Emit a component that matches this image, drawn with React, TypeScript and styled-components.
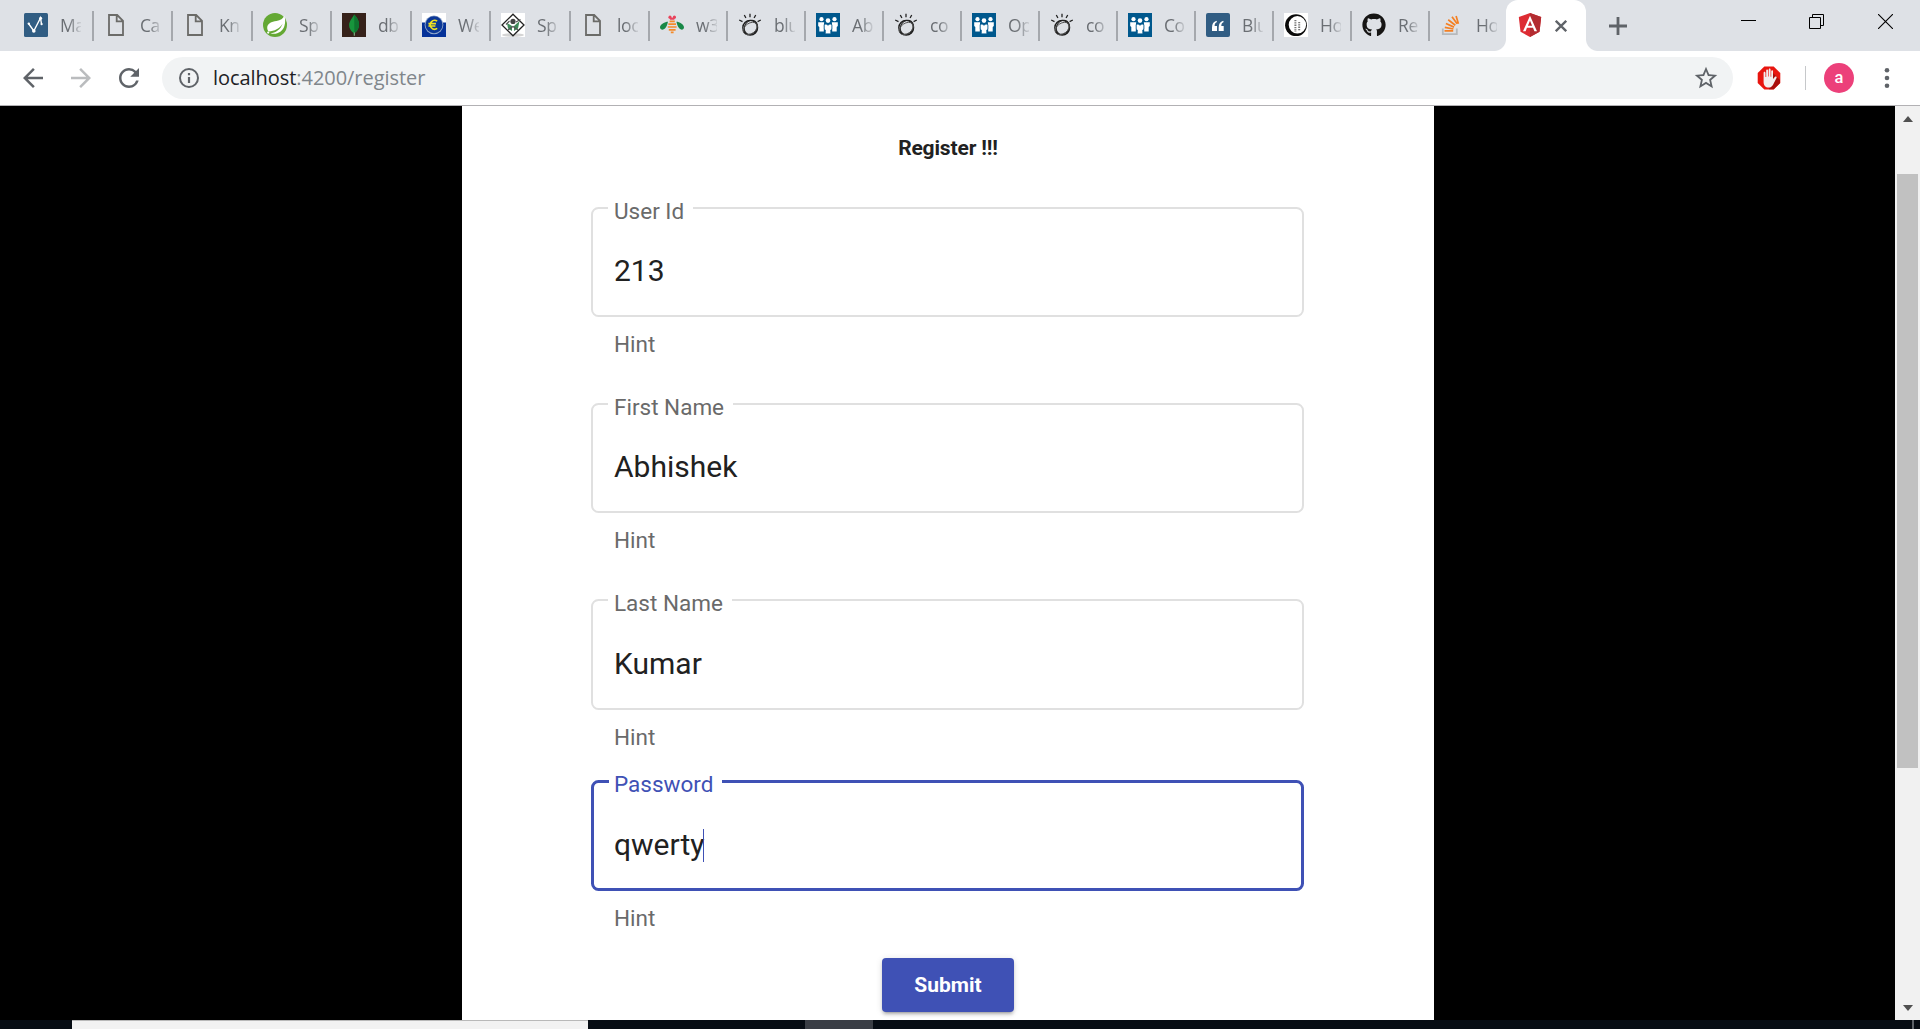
import React from "react";
import styled, { createGlobalStyle } from "styled-components";
import { FaGithub } from "react-icons/fa";

const GlobalStyle = createGlobalStyle`
  * { box-sizing: border-box; }
  html, body, #root { height: 100%; }
  body { margin: 0; overflow: hidden; background: #000; font-family: Roboto, sans-serif; }
`;

const Screen = styled.div`
  display: flex;
  flex-direction: column;
  width: 1920px;
  height: 1029px;
  overflow: hidden;
`;

/* ---------- tab strip ---------- */

const TabStrip = styled.div`
  display: flex;
  flex: none;
  height: 51px;
  padding-left: 12px;
  background: #dee1e6;
`;

const Tab = styled.div<{ $width: number }>`
  display: flex;
  flex: none;
  align-items: center;
  width: ${(p) => p.$width}px;
  height: 51px;
  padding-left: 12px;
`;

const TabDivider = styled.div`
  flex: none;
  width: 2px;
  height: 30px;
  margin: 11px -2px 0 0;
  background: #a5a8ad;
`;

const Favicon = styled.svg`
  display: block;
  flex: none;
  width: 24px;
  height: 24px;
  margin-top: -1px;
`;

const TabTitle = styled.span`
  flex: none;
  width: 21px;
  margin: -1px 0 0 12px;
  overflow: hidden;
  white-space: nowrap;
  font: 400 17.5px/26px "Open Sans", sans-serif;
  letter-spacing: -0.4px;
  color: #6a6e73;
  -webkit-mask-image: linear-gradient(90deg, #000 40%, rgba(0, 0, 0, 0.15) 100%);
  mask-image: linear-gradient(90deg, #000 40%, rgba(0, 0, 0, 0.15) 100%);
`;

const ActiveTab = styled.div`
  position: relative;
  display: flex;
  flex: none;
  align-items: center;
  gap: 13px;
  width: 80px;
  height: 51px;
  padding-left: 12px;
  border-radius: 12px 12px 0 0;
  background: #fff;
  &::before,
  &::after {
    content: "";
    position: absolute;
    bottom: 0;
    width: 12px;
    height: 12px;
  }
  &::before {
    right: 100%;
    background: radial-gradient(circle at 0 0, transparent 11.5px, #fff 12.5px);
  }
  &::after {
    left: 100%;
    background: radial-gradient(circle at 100% 0, transparent 11.5px, #fff 12.5px);
  }
`;

const NewTab = styled.div`
  display: flex;
  flex: none;
  align-items: center;
  padding-left: 23px;
`;

const WindowControls = styled.div`
  display: grid;
  grid-template-columns: 68px 69px 15px;
  margin: 14px 27px 0 auto;
`;

const Glyph = styled.svg<{ $w: number; $h?: number }>`
  display: block;
  flex: none;
  width: ${(p) => p.$w}px;
  height: ${(p) => p.$h ?? p.$w}px;
`;

/* ---------- toolbar ---------- */

const Toolbar = styled.div`
  display: flex;
  flex: none;
  align-items: center;
  height: 55px;
  padding-left: 18px;
  border-bottom: 1px solid #b2b1b4;
  background: #fff;
`;

const NavButtons = styled.div`
  display: flex;
  gap: 18px;
  width: 144px;
`;

const Omnibox = styled.div`
  display: flex;
  align-items: center;
  width: 1571px;
  height: 42px;
  padding: 0 12px 0 15px;
  border-radius: 21px;
  background: #f1f3f4;
`;

const Url = styled.div`
  flex: 1;
  font: 400 20px/30px "Open Sans", sans-serif;
  margin: 0 0 0 12px;
  letter-spacing: -0.05px;
  color: #80868b;
`;

const Host = styled.span`
  color: #202124;
`;

const Extensions = styled.div`
  display: flex;
  align-items: center;
  padding-left: 24px;
`;

const ToolbarRule = styled.div`
  width: 1px;
  height: 24px;
  margin: 0 18px 0 24px;
  background: #c6c8ca;
`;

const Avatar = styled.div`
  width: 30px;
  height: 30px;
  margin-right: 18px;
  border-radius: 50%;
  background: #ec407a;
  color: #fff;
  font: 500 16.5px/29px Roboto, sans-serif;
  text-align: center;
`;

/* ---------- page ---------- */

const Viewport = styled.div`
  display: flex;
  flex: none;
  height: 914px;
  background: #000;
`;

const PageArea = styled.main`
  flex: 1;
  display: flex;
  padding-left: 462px;
`;

const Card = styled.form`
  display: flex;
  flex-direction: column;
  align-items: center;
  width: 972px;
  height: 914px;
  background: #fff;
`;

const Heading = styled.h4`
  height: 101px;
  margin: 0;
  padding-top: 27px;
  font: 700 21px/30px Roboto, sans-serif;
  letter-spacing: -0.15px;
  color: #212121;
`;

const Field = styled.div<{ $height: number }>`
  flex: none;
  width: 713px;
  height: ${(p) => p.$height}px;
  margin-right: 1px;
`;

const Outline = styled.div<{ $focused?: boolean; $height: number }>`
  display: flex;
  flex-direction: column;
  align-items: flex-start;
  height: ${(p) => p.$height}px;
  padding-left: 15px;
  border: ${(p) => (p.$focused ? "3px solid #3f51b5" : "2px solid #e0e0e0")};
  border-radius: 7.5px;
`;

const Label = styled.label<{ $focused?: boolean }>`
  height: 26px;
  margin-top: ${(p) => (p.$focused ? -12 : -11)}px;
  padding: 0 9px 0 ${(p) => (p.$focused ? 5 : 6)}px;
  background: #fff;
  font: 400 22.5px/26px Roboto, sans-serif;
  color: ${(p) => (p.$focused ? "#3f51b5" : "#6a6a6a")};
`;

const Value = styled.div<{ $focused?: boolean; $gap: number }>`
  display: flex;
  align-items: center;
  height: 34px;
  margin: ${(p) => p.$gap}px 0 0 ${(p) => (p.$focused ? 5 : 6)}px;
  font: 400 30px/34px Roboto, sans-serif;
  color: #212121;
`;

const Caret = styled.span`
  width: 1px;
  height: 33px;
  margin-left: -1px;
  background: #3f51b5;
`;

const Hint = styled.div`
  margin: 14px 0 0 23px;
  font: 400 22.5px/26px Roboto, sans-serif;
  color: #6a6a6a;
`;

const Submit = styled.button`
  flex: none;
  width: 132px;
  height: 54px;
  padding: 0;
  border: 0;
  border-radius: 4px;
  background: #3f51b5;
  box-shadow: 0 4px 2px -3px rgba(0, 0, 0, 0.2), 0 3px 3px rgba(0, 0, 0, 0.14), 0 1px 7px rgba(0, 0, 0, 0.12);
  color: #fff;
  font: 700 21px/54px Roboto, sans-serif;
`;

const Scrollbar = styled.div`
  display: flex;
  flex-direction: column;
  align-items: center;
  flex: none;
  width: 25px;
  background: #f1f1f1;
`;

const Thumb = styled.div`
  width: 21px;
  height: 594px;
  margin: 52px 0 auto;
  background: #c1c1c1;
`;

const ScrollArrow = styled.div<{ $down?: boolean }>`
  flex: none;
  width: 0;
  height: 0;
  margin: ${(p) => (p.$down ? "0 0 9px" : "10px 0 0")};
  border: 5.5px solid transparent;
  ${(p) => (p.$down ? "border-top: 6px solid #505050; border-bottom: 0;" : "border-bottom: 6px solid #505050; border-top: 0;")}
`;

/* ---------- taskbar sliver ---------- */

const Taskbar = styled.div`
  display: flex;
  flex: none;
  height: 9px;
  padding-left: 72px;
  background: #060c13;
`;

const SearchBox = styled.div`
  width: 516px;
  border-top: 1px solid #b9b9b9;
  background: #f2f2f2;
`;

const RunningApp = styled.div`
  width: 68px;
  margin-left: 217px;
  background: #3a3e45;
`;

const ShowDesktop = styled.div`
  width: 8px;
  margin-left: auto;
  border-left: 2px solid #5c6167;
`;

/* ---------- drawings ---------- */

const icons: Record<string, React.ReactNode> = {
  vn: (
    <>
      <rect width="24" height="24" rx="1.5" fill="#315d83" />
      <path d="M4.5 10.5 L9.8 18 L16.5 5 L17.5 11" fill="none" stroke="#fff" strokeWidth="1.4" />
      <circle cx="4.8" cy="10.6" r="1.2" fill="#fff" />
      <circle cx="9.8" cy="18" r="1.8" fill="#fff" />
      <circle cx="16.6" cy="5.2" r="1.5" fill="#fff" />
      <circle cx="17.6" cy="11.2" r="1.1" fill="#fff" />
    </>
  ),
  page: (
    <path d="M5 2 H13.2 L19 7.8 V22 H5 Z M12.7 2 V8.3 H19" fill="none" stroke="#6b6b68" strokeWidth="1.8" />
  ),
  spring: (
    <>
      <circle cx="12" cy="12" r="12" fill="#64a834" />
      <path d="M21.2 2.8 C20 5.8 17.6 7.4 13.5 8 C8.5 8.7 4.3 10.5 4.2 14.8 C4.2 16.3 4.7 17.6 5.6 18.6 C11.5 18.2 16.6 15.6 19.6 10.8 C17.6 16.6 12.5 20 7.4 20.4 C14 22 19.6 18.6 21.4 13 C22.6 9.2 22.4 5.8 21.2 2.8 Z" fill="#fff" />
      <circle cx="5.2" cy="19.6" r="1.1" fill="#fff" />
    </>
  ),
  mongo: (
    <>
      <rect width="24" height="24" fill="#36221a" />
      <path d="M12.2 1.5 C15.5 5 17.2 8 17 12 C16.8 16 14.8 18.6 12.6 20 L12.4 22.8 H11.8 L11.6 20 C9 18 7 15.5 7.1 12 C7.2 8 10.5 5 12.2 1.5 Z" fill="#17953c" />
      <path d="M12.2 1.5 C15.5 5 17.2 8 17 12 C16.8 16 14.8 18.6 12.4 20 Z" fill="#0f7530" />
      <path d="M11.9 19.5 h0.7 v3.3 h-0.7z" fill="#b8c4ab" />
    </>
  ),
  euro: (
    <>
      <rect width="24" height="24" fill="#fff" />
      <rect y="9.5" width="24" height="14.5" fill="#053299" />
      <circle cx="12" cy="11.8" r="9.4" fill="#8fa6c9" />
      <circle cx="12" cy="11.8" r="8.5" fill="#0b3796" />
      <path d="M15.2 8.2 A4.4 4.4 0 1 0 15.2 15.4 M6.4 10.6 H14 M6.4 13 H13.4" fill="none" stroke="#f4e31f" strokeWidth="1.6" />
    </>
  ),
  diamond: (
    <>
      <rect width="24" height="24" fill="#fff" />
      <ellipse cx="12" cy="22" rx="11" ry="1.8" fill="#d4d4d4" />
      <path d="M12 1.2 L23 12 L12 22.8 L1 12 Z" fill="#fff" stroke="#222" strokeWidth="1.3" />
      <path d="M6 10 L11 13 V18 L7 15.5 Z M18.5 8 L13 13 V18 L17 15.5 Z" fill="#3f8a59" />
      <circle cx="12" cy="8.4" r="2.6" fill="#444" />
      <path d="M5 11.5 L8.5 8 M15 9 L19.5 6.5 M7 17 L12 13.5 L17 17" stroke="#555" strokeWidth="1.2" fill="none" />
    </>
  ),
  bee: (
    <>
      <circle cx="10" cy="4.2" r="1.6" fill="#e9435c" />
      <circle cx="14.4" cy="4.2" r="1.6" fill="#e9435c" />
      <path d="M9.4 4.8 H15 L14.2 6.8 H10.2 Z" fill="#e9435c" />
      <path d="M8 8.8 C5 8.8 0 11.5 0 14.2 C0 16.8 3 17.5 5 15.6 C6.8 13.8 7.2 11.5 8 8.8 Z M16.4 8.8 C19.4 8.8 24 11.5 24 14.2 C24 16.8 21.4 17.5 19.4 15.6 C17.6 13.8 17.2 11.5 16.4 8.8 Z" fill="#188847" />
      <path d="M9.6 8.3 H14.8 M8.4 11.2 H16 M7.8 14 H16.6 M8.8 16.8 H15.6 M10.8 19.4 H13.6" stroke="#f38b2b" strokeWidth="1.7" />
    </>
  ),
  bulb: (
    <>
      <circle cx="12.2" cy="14.8" r="7.4" fill="none" stroke="#1a1a1a" strokeWidth="1.3" />
      <ellipse cx="12.8" cy="14.3" rx="6.2" ry="7.4" transform="rotate(35 12.8 14.3)" fill="none" stroke="#222" strokeWidth="1.1" />
      <ellipse cx="12.2" cy="15.5" rx="7.8" ry="5.2" transform="rotate(-35 12.2 15.5)" fill="none" stroke="#555" strokeWidth=".9" />
      <path d="M12 0.8 V4.3 M6.3 2 L7.9 5 M17.7 2 L16.1 5 M1.2 7 L4.5 8.6 M22.8 7 L19.6 8.6" stroke="#222" strokeWidth="1.3" />
    </>
  ),
  people: (
    <>
      <rect width="24" height="24" fill="#00588d" />
      <g fill="#fff">
        <circle cx="5.5" cy="6.2" r="2.1" />
        <circle cx="18.5" cy="6.2" r="2.1" />
        <circle cx="12" cy="7.6" r="2.3" />
        <path d="M2.2 9.2 H8.2 L7.8 12 V18.5 H3.3 V14 L2.2 13 Z M21.8 9.2 H15.8 L16.2 12 V18.5 H20.7 V14 L21.8 13 Z" />
        <path d="M8.3 12.5 Q8.3 11 10 11 L12 12.3 L14 11 Q15.8 11 15.8 12.5 V16 L14.7 17 V20.8 H9.4 V17 L8.3 16 Z" stroke="#00588d" strokeWidth=".6" />
      </g>
    </>
  ),
  quote: (
    <>
      <rect width="24" height="24" rx="2" fill="#315d83" />
      <path d="M10.5 7.7 C7.5 8.5 6 10.8 6 14.5 V18 H11 V13 H8.6 C8.6 11 9.2 9.7 11 9 Z M17.2 7.7 C14.2 8.5 12.7 10.8 12.7 14.5 V18 H17.7 V13 H15.3 C15.3 11 15.9 9.7 17.7 9 Z" fill="#fff" />
    </>
  ),
  ring: (
    <>
      <rect width="24" height="24" fill="#fff" />
      <circle cx="12" cy="12.2" r="10.9" fill="#0a0a0a" />
      <circle cx="13.4" cy="11.8" r="8.7" fill="#fff" />
      <path d="M11.4 7 V19 M15.2 9 V18" stroke="#777" strokeWidth="2" strokeDasharray="1.3 1" />
    </>
  ),
  stack: (
    <>
      <path d="M2.8 15.5 V21.2 H16.8 V15.5" fill="none" stroke="#b6b9bc" strokeWidth="1.8" />
      <path d="M5.3 18 H14 M5.6 14.5 L14.2 16.2 M6.7 10.7 L14.8 14.3 M9 7 L16.1 12.4 M12.8 3.9 L17.9 11 M16.9 3.2 L19.2 11" transform="translate(-.8 -.2)" stroke="#f48024" strokeWidth="1.7" />
    </>
  ),
  angular: (
    <>
      <path d="M12 0 L23.2 4 L21.5 18.8 L12 24 L2.5 18.8 L0.8 4 Z" fill="#dd2c33" />
      <path d="M12 0 L23.2 4 L21.5 18.8 L12 24 Z" fill="#b32c31" />
      <path d="M12 2.7 L5 18.3 H7.6 L9 14.8 H15 L16.4 18.3 H19 Z M12 7.7 L14.1 12.7 H9.9 Z" fill="#fff" fillRule="evenodd" />
    </>
  ),
};

const tabs = [
  { icon: "vn", title: "Ma", width: 80 },
  { icon: "page", title: "Ca", width: 79 },
  { icon: "page", title: "Kn", width: 80 },
  { icon: "spring", title: "Sp", width: 79 },
  { icon: "mongo", title: "db", width: 80 },
  { icon: "euro", title: "We", width: 79 },
  { icon: "diamond", title: "Sp", width: 80 },
  { icon: "page", title: "loc", width: 79 },
  { icon: "bee", title: "w3", width: 78 },
  { icon: "bulb", title: "blu", width: 78 },
  { icon: "people", title: "Ab", width: 78 },
  { icon: "bulb", title: "co", width: 78 },
  { icon: "people", title: "Op", width: 78 },
  { icon: "bulb", title: "co", width: 78 },
  { icon: "people", title: "Co", width: 78 },
  { icon: "quote", title: "Blu", width: 78 },
  { icon: "ring", title: "Ho", width: 78 },
  { icon: "github", title: "Re", width: 78 },
  { icon: "stack", title: "Ho", width: 78 },
];

const fields = [
  { label: "User Id", value: "213", height: 196, box: 110, gap: 30 },
  { label: "First Name", value: "Abhishek", height: 196, box: 110, gap: 30 },
  { label: "Last Name", value: "Kumar", height: 181, box: 111, gap: 31 },
  { label: "Password", value: "qwerty", height: 178, box: 111, gap: 31, focused: true },
];

export default function App() {
  return (
    <Screen>
      <GlobalStyle />
      <TabStrip>
        {tabs.map((tab, i) => (
          <React.Fragment key={i}>
            {i > 0 && <TabDivider />}
            <Tab $width={tab.width}>
              {tab.icon === "github" ? (
                <Favicon as={FaGithub} color="#161514" />
              ) : (
                <Favicon viewBox="0 0 24 24">{icons[tab.icon]}</Favicon>
              )}
              <TabTitle>{tab.title}</TabTitle>
            </Tab>
          </React.Fragment>
        ))}
        <ActiveTab>
          <Favicon viewBox="0 0 24 24">{icons.angular}</Favicon>
          <Glyph $w={12} viewBox="0 0 12 12">
            <path d="M.8 .8 L11.2 11.2 M11.2 .8 L.8 11.2" stroke="#5f6368" strokeWidth="2.3" />
          </Glyph>
        </ActiveTab>
        <NewTab>
          <Glyph $w={18} viewBox="0 0 18 18">
            <path d="M9 0 V18 M0 9 H18" stroke="#5f6368" strokeWidth="2.8" />
          </Glyph>
        </NewTab>
        <WindowControls>
          <Glyph $w={15} viewBox="0 0 15 15">
            <path d="M0 6.5 H15" stroke="#000" />
          </Glyph>
          <Glyph $w={15} viewBox="0 0 15 15">
            <path d="M.5 3.5 H11.5 V14.5 H.5 Z M3.5 3.5 V.5 H14.5 V11.5 H11.5" fill="none" stroke="#000" />
          </Glyph>
          <Glyph $w={15} viewBox="0 0 15 15">
            <path d="M0 0 L15 15 M15 0 L0 15" stroke="#000" strokeWidth="1.1" />
          </Glyph>
        </WindowControls>
      </TabStrip>

      <Toolbar>
        <NavButtons>
          <Glyph $w={30} viewBox="0 0 24 24">
            <path d="M20 11H7.83l5.59-5.59L12 4l-8 8 8 8 1.41-1.41L7.83 13H20v-2z" fill="#5f6368" />
          </Glyph>
          <Glyph $w={30} viewBox="0 0 24 24">
            <path d="M12 4l-1.41 1.41L16.17 11H4v2h12.17l-5.58 5.59L12 20l8-8z" fill="#babcbe" />
          </Glyph>
          <Glyph $w={30} viewBox="0 0 24 24">
            <path d="M17.65 6.35A7.958 7.958 0 0 0 12 4c-4.42 0-7.99 3.58-7.99 8s3.57 8 7.99 8c3.73 0 6.84-2.55 7.73-6h-2.08A5.99 5.99 0 0 1 12 18c-3.31 0-6-2.69-6-6s2.69-6 6-6c1.66 0 3.14.69 4.22 1.78L13 11h7V4l-2.35 2.35z" fill="#5f6368" />
          </Glyph>
        </NavButtons>
        <Omnibox>
          <Glyph $w={24} viewBox="0 0 24 24">
            <circle cx="12" cy="12" r="9" fill="none" stroke="#5f6368" strokeWidth="2" />
            <path d="M12 7 V9.2 M12 11 V17" stroke="#5f6368" strokeWidth="2.2" />
          </Glyph>
          <Url>
            <Host>localhost</Host>:4200/register
          </Url>
          <Glyph $w={30} viewBox="0 0 24 24">
            <path transform="translate(1.2 1.2) scale(.9)" d="M22 9.24l-7.19-.62L12 2 9.19 8.63 2 9.24l5.46 4.73L5.82 21 12 17.27 18.18 21l-1.63-7.03L22 9.24zM12 15.4l-3.76 2.27 1-4.28-3.32-2.88 4.38-.38L12 6.1l1.71 4.04 4.38.38-3.32 2.88 1 4.28L12 15.4z" fill="#5f6368" />
          </Glyph>
        </Omnibox>
        <Extensions>
          <Glyph $w={24} viewBox="0 0 24 24">
            <path d="M7.3 .5 H16.7 L23.3 7.1 V16.9 L16.7 23.5 H7.3 L.7 16.9 V7.1 Z" fill="#e8150f" />
            <path d="M15 6 L23 14 V16.9 L16.7 23.3 H12 Z" fill="#a90d0b" />
            <path d="M6.6 7 C6.6 5.4 8.4 5.4 8.5 7 V11 H9.2 V4.5 C9.2 3 11 3 11.1 4.5 V10.5 H11.7 V3.8 C11.8 2.2 13.5 2.2 13.6 3.8 V10.7 H14.2 V5.2 C14.3 3.8 16 3.8 16 5.2 V13 L18 10.8 C19 10 20.1 10.8 19.5 12 L16.2 18.4 C15.2 20.5 13.7 21.5 11.7 21.5 C8.4 21.5 6.6 19.5 6.6 16 Z" fill="#f3eeee" />
          </Glyph>
          <ToolbarRule />
          <Avatar>a</Avatar>
          <Glyph $w={30} viewBox="0 0 30 30">
            <g fill="#5f6368">
              <circle cx="15" cy="7.3" r="2.3" />
              <circle cx="15" cy="15" r="2.3" />
              <circle cx="15" cy="22.7" r="2.3" />
            </g>
          </Glyph>
        </Extensions>
      </Toolbar>

      <Viewport>
        <PageArea>
          <Card>
            <Heading>Register !!!</Heading>
            {fields.map((f) => (
              <Field key={f.label} $height={f.height}>
                <Outline $focused={f.focused} $height={f.box}>
                  <Label $focused={f.focused}>{f.label}</Label>
                  <Value $focused={f.focused} $gap={f.gap}>
                    {f.value}
                    {f.focused && <Caret />}
                  </Value>
                </Outline>
                <Hint>Hint</Hint>
              </Field>
            ))}
            <Submit type="button">Submit</Submit>
          </Card>
        </PageArea>
        <Scrollbar>
          <ScrollArrow />
          <Thumb />
          <ScrollArrow $down />
        </Scrollbar>
      </Viewport>

      <Taskbar>
        <SearchBox />
        <RunningApp />
        <ShowDesktop />
      </Taskbar>
    </Screen>
  );
}
